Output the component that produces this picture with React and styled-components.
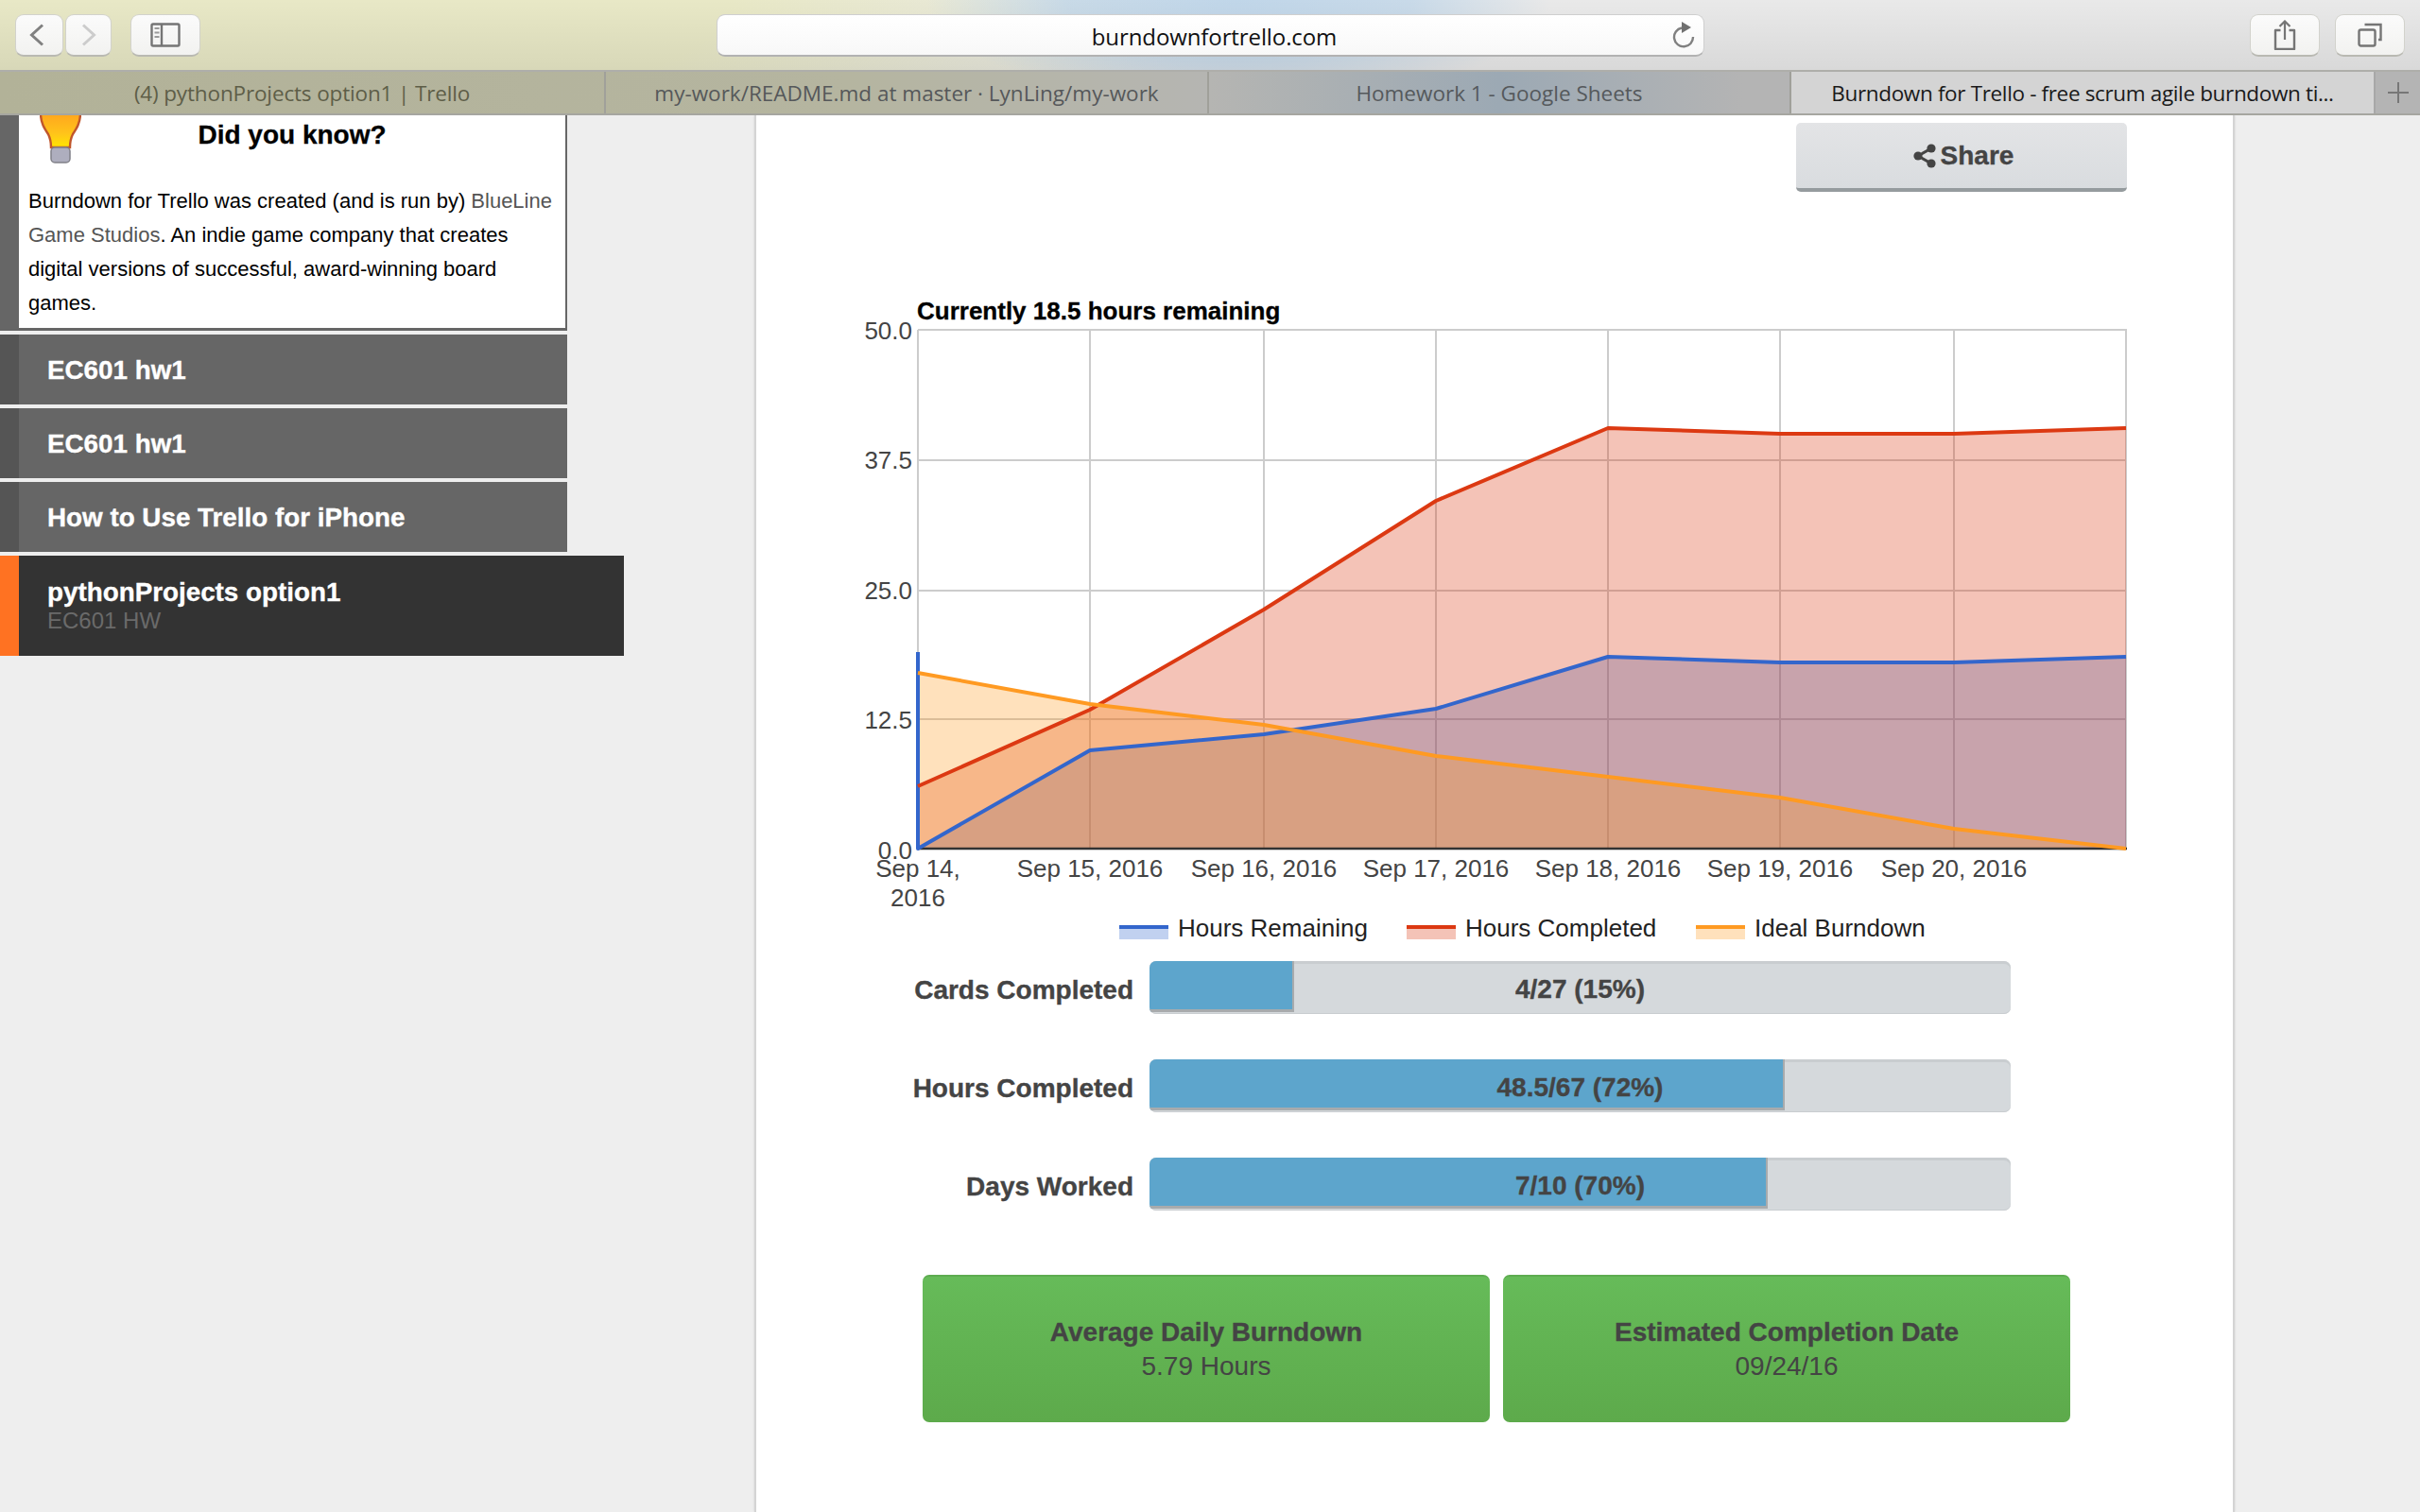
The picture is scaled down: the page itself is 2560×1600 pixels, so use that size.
import React from "react";
import styled, { createGlobalStyle } from "styled-components";

const Global = createGlobalStyle`
  html, body { margin: 0; padding: 0; background: #eeeeee; }
  body { font-family: "Liberation Sans", Arial, sans-serif; }
  * { box-sizing: border-box; }
`;

const Shell = styled.div`
  width: 2560px;
  height: 1600px;
  overflow: hidden;
  display: flex;
  flex-direction: column;
`;

const Toolbar = styled.header`
  height: 76px;
  flex: none;
  display: flex;
  align-items: flex-start;
  padding: 15px 16px 0;
  border-bottom: 2px solid #aeaeaa;
  background:
    linear-gradient(180deg, rgba(0, 0, 0, 0) 0%, rgba(0, 0, 0, 0.07) 100%),
    radial-gradient(ellipse 330px 110px at 1310px 0px, #c0d6e9 0%, rgba(192, 214, 233, 0.8) 55%, rgba(192, 214, 233, 0) 100%),
    radial-gradient(ellipse 1050px 260px at 250px 0px, #e8e8c6 0%, #e8e8c6 50%, rgba(232, 232, 198, 0) 100%),
    #e9e9e9;
`;

const ToolButton = styled.button`
  flex: none;
  width: ${(p) => p.$w}px;
  height: 45px;
  margin-left: ${(p) => p.$ml || 0}px;
  padding: 0 ${(p) => p.$pr || 0}px 0 0;
  border: 1px solid #d2d2cc;
  border-bottom: 2px solid #b9b9b2;
  border-radius: 9px;
  background: linear-gradient(180deg, #fbfbfb 0%, #f2f2f0 100%);
  display: flex;
  align-items: center;
  justify-content: center;
`;

const UrlBar = styled.div`
  flex: none;
  width: 1045px;
  height: 45px;
  margin-left: 546px;
  padding: 0 8px 0 0;
  border: 1px solid #cfcfcf;
  border-bottom: 2px solid #b2b2b2;
  border-radius: 9px;
  background: linear-gradient(180deg, #ffffff 0%, #f8f8f8 100%);
  display: flex;
  align-items: center;
`;

const UrlText = styled.span`
  flex: 1;
  padding: 2px 0 0 42px;
  text-align: center;
  font-family: "Open Sans", sans-serif;
  font-size: 24px;
  letter-spacing: -0.1px;
  color: #111;
`;

const ToolSpacer = styled.div`
  flex: 1;
`;

const TabBar = styled.nav`
  height: 46px;
  flex: none;
  display: flex;
  border-bottom: 2px solid #a6a6a0;
  background: linear-gradient(90deg, #b2b298 0%, #b5b5a0 35%, #b5b5b2 50%, #9ca9b4 62%, #b4b4b4 72%, #b4b4b4 100%);
`;

const Tab = styled.div`
  flex: none;
  width: ${(p) => p.$w}px;
  border-right: 2px solid ${(p) => (p.$active ? "#a8a8a8" : "#a0a09a")};
  display: flex;
  align-items: center;
  justify-content: center;
  font-family: "Open Sans", sans-serif;
  font-size: 22.5px;
  letter-spacing: ${(p) => p.$ls || 0}px;
  color: ${(p) => p.$color};
  background: ${(p) => (p.$active ? "#d4d4d4" : "transparent")};
  white-space: nowrap;
`;

const NewTab = styled.div`
  flex: 1;
  display: flex;
  align-items: center;
  justify-content: center;
`;

const Main = styled.main`
  flex: 1;
  min-height: 0;
  display: flex;
  overflow: hidden;
`;

const Sidebar = styled.aside`
  flex: none;
  width: 660px;
  display: flex;
  flex-direction: column;
`;

const TipCard = styled.section`
  width: 600px;
  height: 228px;
  margin-bottom: 4px;
  position: relative;
  background: #fff;
  border-left: 20px solid #666;
  border-right: 2px solid #666;
  border-bottom: 3px solid #666;
`;

const Bulb = styled.svg`
  position: absolute;
  left: 22px;
  top: 0;
`;

const TipTitle = styled.h3`
  margin: 0;
  height: 73px;
  padding: 4px 0 0 0;
  text-align: center;
  font-size: 28px;
  line-height: 34px;
  font-weight: 700;
  color: #000;
  -webkit-text-stroke: 0.3px #000;
`;

const TipText = styled.p`
  margin: 0;
  padding: 0 4px 0 10px;
  font-size: 22px;
  line-height: 36px;
  color: #000;
`;

const TipLink = styled.span`
  color: #555;
`;

const BoardItem = styled.div`
  width: ${(p) => (p.$active ? 660 : 600)}px;
  height: ${(p) => (p.$active ? 106 : 74)}px;
  margin-bottom: 4px;
  padding: ${(p) => (p.$active ? 0 : 2)}px 0 0 30px;
  border-left: 20px solid ${(p) => (p.$active ? "#ff7222" : "#555555")};
  background: ${(p) => (p.$active ? "#333333" : "#666666")};
  display: flex;
  flex-direction: column;
  justify-content: center;
`;

const BoardName = styled.div`
  font-size: 27.8px;
  line-height: 32px;
  font-weight: 700;
  color: #fff;
  -webkit-text-stroke: 0.35px #fff;
`;

const BoardOrg = styled.div`
  font-size: 24px;
  line-height: 28px;
  color: #6a6a6a;
`;

const Page = styled.div`
  flex: none;
  width: 1566px;
  margin-left: 138px;
  padding: 8px 112px 0 100px;
  background: #fff;
  border-left: 2px solid #d4d4d4;
  border-right: 2px solid #d4d4d4;
  box-shadow: 0 0 2px rgba(0, 0, 0, 0.12);
`;

const ShareRow = styled.div`
  display: flex;
  justify-content: flex-end;
`;

const ShareButton = styled.button`
  width: 350px;
  height: 73px;
  padding: 0 0 0 4px;
  border: 0;
  border-bottom: 4px solid #959b9e;
  border-radius: 5px;
  background: linear-gradient(180deg, #e3e4e6 0%, #d9dcdf 100%);
  display: flex;
  align-items: center;
  justify-content: center;
  gap: 5px;
  font-family: "Liberation Sans", sans-serif;
  font-size: 28px;
  font-weight: 700;
  color: #444;
  -webkit-text-stroke: 0.35px #444;
`;

const ChartSvg = styled.svg`
  display: block;
  margin-top: 97px;
  font-family: "Liberation Sans", sans-serif;
`;

const Stats = styled.div`
  margin-top: 17px;
  display: flex;
  flex-direction: column;
  gap: 48px;
`;

const StatRow = styled.div`
  display: flex;
  align-items: center;
  gap: 17px;
`;

const StatLabel = styled.div`
  width: 299px;
  padding-top: 6px;
  text-align: right;
  font-size: 28px;
  font-weight: 700;
  color: #444;
  -webkit-text-stroke: 0.35px #444;
`;

const Track = styled.div`
  width: 911px;
  height: 56px;
  display: grid;
  overflow: hidden;
  border-radius: 7px;
  background: #d5d9dc;
  box-shadow: inset 0 3px 0 #c9cdd0, inset 0 -1px 0 #c9cdd0;
`;

const Fill = styled.div`
  grid-area: 1 / 1;
  justify-self: start;
  height: 54px;
  background: #5da5cc;
  border-bottom: 3px solid #a8abad;
  border-right: 2px solid #a8abad;
`;

const TrackText = styled.div`
  grid-area: 1 / 1;
  display: flex;
  align-items: center;
  justify-content: center;
  padding-top: 4px;
  font-size: 28px;
  font-weight: 700;
  color: #444;
  -webkit-text-stroke: 0.35px #444;
`;

const Cards = styled.div`
  margin: 68px 0 0 76px;
  width: 1214px;
  display: flex;
  gap: 14px;
`;

const StatCard = styled.div`
  flex: 1;
  height: 156px;
  border-radius: 7px;
  border-top: 2px solid #5dac50;
  background: linear-gradient(180deg, #66bb59 0%, #5daa4b 100%);
  display: flex;
  flex-direction: column;
  align-items: center;
  justify-content: center;
  color: #444;
`;

const CardTitle = styled.div`
  font-size: 28px;
  line-height: 36px;
  font-weight: 700;
  -webkit-text-stroke: 0.35px #444;
`;

const CardValue = styled.div`
  font-size: 28px;
  line-height: 36px;
`;

const xs = [971, 1153, 1337, 1519, 1701, 1883, 2067, 2249];
const ys = [349, 487, 625, 761];
const base = 898;
const series = [
  { color: "#3366cc", pts: [898, 794, 777, 750, 695, 701, 701, 695], lead: 690 },
  { color: "#dc3912", pts: [832, 751, 645, 530, 453, 459, 459, 453] },
  { color: "#ff9a22", pts: [712, 745, 767, 800, 822, 844, 877, 898] },
];
const yLabels = [
  ["50.0", 359],
  ["37.5", 496],
  ["25.0", 634],
  ["12.5", 771],
  ["0.0", 909],
];
const xLabels = [
  ["Sep 15, 2016", 1153],
  ["Sep 16, 2016", 1337],
  ["Sep 17, 2016", 1519],
  ["Sep 18, 2016", 1701],
  ["Sep 19, 2016", 1883],
  ["Sep 20, 2016", 2067],
];
const legend = [
  ["Hours Remaining", 1184, "#3366cc"],
  ["Hours Completed", 1488, "#dc3912"],
  ["Ideal Burndown", 1794, "#ff9a22"],
];

const Chart = () => (
  <ChartSvg width="1400" height="700" viewBox="900 300 1400 700">
    <text x="970" y="338" fontSize="26" fontWeight="700" fill="#000" stroke="#000" strokeWidth="0.3">Currently 18.5 hours remaining</text>
    {ys.map((y) => (
      <line key={y} x1="971" x2="2250" y1={y} y2={y} stroke="#cccccc" strokeWidth="2" />
    ))}
    {xs.map((x) => (
      <line key={x} x1={x} x2={x} y1="349" y2={base} stroke="#cccccc" strokeWidth="2" />
    ))}
    {series.map((s) => {
      const line = s.pts.map((y, i) => `${xs[i]},${y}`).join(" ");
      return (
        <polygon key={s.color + "a"} points={`971,${base} ${line} 2249,${base}`} fill={s.color} fillOpacity="0.3" />
      );
    })}
    <line x1="971" x2="2250" y1={base} y2={base} stroke="#333333" strokeWidth="2.5" />
    {series.map((s) => {
      const line = s.pts.map((y, i) => `${xs[i]},${y}`).join(" ");
      return (
        <polyline
          key={s.color}
          points={s.lead ? `971,${s.lead} ${line}` : line}
          fill="none"
          stroke={s.color}
          strokeWidth="4"
          strokeLinejoin="round"
        />
      );
    })}
    {yLabels.map(([t, y]) => (
      <text key={t} x="965" y={y} textAnchor="end" fontSize="26" fill="#444">{t}</text>
    ))}
    <text x="971" y="928" textAnchor="middle" fontSize="26" fill="#444">Sep 14,</text>
    <text x="971" y="959" textAnchor="middle" fontSize="26" fill="#444">2016</text>
    {xLabels.map(([t, x]) => (
      <text key={t} x={x} y="928" textAnchor="middle" fontSize="26" fill="#444">{t}</text>
    ))}
    {legend.map(([t, x, c]) => (
      <g key={t}>
        <rect x={x} y="979" width="52" height="15" fill={c} fillOpacity="0.3" />
        <rect x={x} y="979" width="52" height="4" fill={c} />
        <text x={x + 62} y="991" fontSize="26" fill="#222">{t}</text>
      </g>
    ))}
  </ChartSvg>
);

const BackIcon = ({ color }) => (
  <svg width="16" height="24" viewBox="0 0 16 24">
    <path d="M14 1.5 L2.5 12 L14 22.5" fill="none" stroke={color} strokeWidth="3" />
  </svg>
);

const ForwardIcon = () => (
  <svg width="16" height="24" viewBox="0 0 16 24">
    <path d="M2 1.5 L13.5 12 L2 22.5" fill="none" stroke="#cccccc" strokeWidth="3" />
  </svg>
);

const SidebarIcon = () => (
  <svg width="32" height="26" viewBox="0 0 32 26">
    <rect x="1.5" y="1.5" width="29" height="23" rx="1.5" fill="none" stroke="#757575" strokeWidth="2.4" />
    <line x1="12" x2="12" y1="1.5" y2="24.5" stroke="#757575" strokeWidth="2.4" />
    <path d="M4.5 6h5M4.5 10.5h5M4.5 15h5" stroke="#9a9a9a" strokeWidth="2" />
  </svg>
);

const ReloadIcon = () => (
  <svg width="26" height="28" viewBox="0 0 26 28">
    <path d="M11 6.5 A10 10 0 1 0 23 16" fill="none" stroke="#808080" strokeWidth="2.4" />
    <path d="M11 0 L21 6 L11 12 Z" fill="#707070" />
  </svg>
);

const ShareSafariIcon = () => (
  <svg width="24" height="32" viewBox="0 0 24 32">
    <path d="M7.5 11 H2 V31 H22 V11 H16.5" fill="none" stroke="#757575" strokeWidth="2.4" strokeLinejoin="round" />
    <path d="M12 2 V21 M6.5 7 L12 1.5 L17.5 7" fill="none" stroke="#757575" strokeWidth="2.2" />
  </svg>
);

const TabsIcon = () => (
  <svg width="26" height="26" viewBox="0 0 26 26">
    <rect x="1.5" y="7.5" width="17" height="17" rx="2" fill="none" stroke="#757575" strokeWidth="2.4" />
    <path d="M7.5 2 H24.5 V18 H22" fill="none" stroke="#757575" strokeWidth="2.4" />
  </svg>
);

const PlusIcon = () => (
  <svg width="22" height="22" viewBox="0 0 22 22">
    <path d="M11 0 V22 M0 11 H22" stroke="#777" strokeWidth="2" />
  </svg>
);

const ShareGlyph = () => (
  <svg width="24" height="26" viewBox="0 0 24 26">
    <path d="M19 5 L5 13 L19 21" stroke="#444" strokeWidth="3" fill="none" />
    <circle cx="19" cy="5" r="4.6" fill="#444" />
    <circle cx="5" cy="13" r="4.6" fill="#444" />
    <circle cx="19" cy="21" r="4.6" fill="#444" />
  </svg>
);

const BulbIcon = () => (
  <Bulb width="44" height="52" viewBox="0 0 44 52">
    <defs>
      <linearGradient id="glass" x1="0" y1="0" x2="0" y2="1">
        <stop offset="0%" stopColor="#ffa51e" />
        <stop offset="60%" stopColor="#ffc41a" />
        <stop offset="100%" stopColor="#ffe600" />
      </linearGradient>
    </defs>
    <path
      d="M1 -2 C1 8 5 14 9 20 C11 24 12 28 12 34 L32 34 C32 28 33 24 35 20 C39 14 43 8 43 -2 Z"
      fill="url(#glass)"
      stroke="#c0562c"
      strokeWidth="2.4"
    />
    <rect x="12" y="34" width="20" height="16" rx="4" fill="#aeaebe" stroke="#808088" strokeWidth="1.5" />
  </Bulb>
);

const stats = [
  ["Cards Completed", 153, "4/27 (15%)"],
  ["Hours Completed", 672, "48.5/67 (72%)"],
  ["Days Worked", 654, "7/10 (70%)"],
];

export default function App() {
  return (
    <Shell>
      <Global />
      <Toolbar>
        <ToolButton $w={51} $pr={6}><BackIcon color="#808080" /></ToolButton>
        <ToolButton $w={49} $ml={2}><ForwardIcon /></ToolButton>
        <ToolButton $w={74} $ml={20}><SidebarIcon /></ToolButton>
        <UrlBar>
          <UrlText>burndownfortrello.com</UrlText>
          <ReloadIcon />
        </UrlBar>
        <ToolSpacer />
        <ToolButton $w={74}><ShareSafariIcon /></ToolButton>
        <ToolButton $w={74} $ml={16}><TabsIcon /></ToolButton>
      </Toolbar>
      <TabBar>
        <Tab $w={641} $ls={-0.15} $color="#5e5e48">(4) pythonProjects option1 | Trello</Tab>
        <Tab $w={638} $color="#55585a">my-work/README.md at master · LynLing/my-work</Tab>
        <Tab $w={616} $color="#55595c">Homework 1 - Google Sheets</Tab>
        <Tab $w={618} $ls={-0.35} $active $color="#1a1a1a">Burndown for Trello - free scrum agile burndown ti...</Tab>
        <NewTab><PlusIcon /></NewTab>
      </TabBar>
      <Main>
        <Sidebar>
          <TipCard>
            <BulbIcon />
            <TipTitle>Did you know?</TipTitle>
            <TipText>
              Burndown for Trello was created (and is run by) <TipLink>BlueLine Game Studios</TipLink>. An indie game company that creates digital versions of successful, award-winning board games.
            </TipText>
          </TipCard>
          <BoardItem><BoardName>EC601 hw1</BoardName></BoardItem>
          <BoardItem><BoardName>EC601 hw1</BoardName></BoardItem>
          <BoardItem><BoardName>How to Use Trello for iPhone</BoardName></BoardItem>
          <BoardItem $active>
            <BoardName>pythonProjects option1</BoardName>
            <BoardOrg>EC601 HW</BoardOrg>
          </BoardItem>
        </Sidebar>
        <Page>
          <ShareRow>
            <ShareButton><ShareGlyph />Share</ShareButton>
          </ShareRow>
          <Chart />
          <Stats>
            {stats.map(([label, w, text]) => (
              <StatRow key={label}>
                <StatLabel>{label}</StatLabel>
                <Track>
                  <Fill style={{ width: w }} />
                  <TrackText>{text}</TrackText>
                </Track>
              </StatRow>
            ))}
          </Stats>
          <Cards>
            <StatCard>
              <CardTitle>Average Daily Burndown</CardTitle>
              <CardValue>5.79 Hours</CardValue>
            </StatCard>
            <StatCard>
              <CardTitle>Estimated Completion Date</CardTitle>
              <CardValue>09/24/16</CardValue>
            </StatCard>
          </Cards>
        </Page>
      </Main>
    </Shell>
  );
}
